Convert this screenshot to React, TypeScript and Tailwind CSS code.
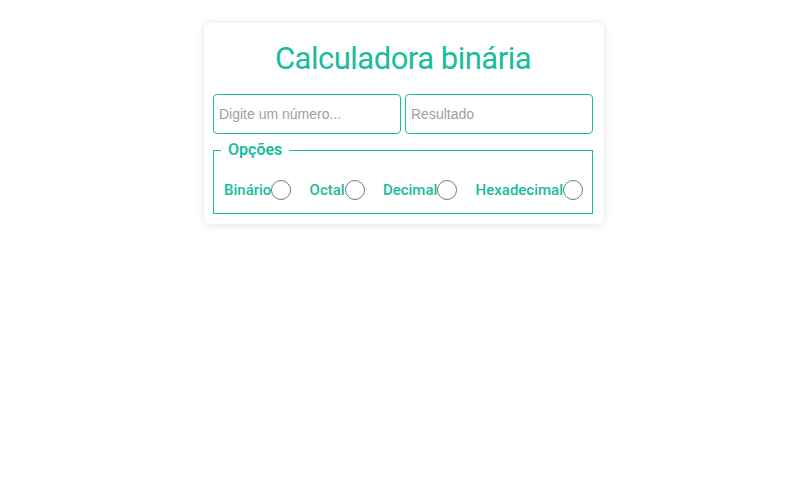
export default function App() {
  const options = ["Binário", "Octal", "Decimal", "Hexadecimal"];

  return (
    <main className="min-h-screen bg-white pr-[3px] pt-[23px] font-['Roboto','Open_Sans',sans-serif]">
      <div className="mx-auto w-[400px] rounded-md bg-white pb-[10px] pl-[9px] pr-[11px] pt-[16px] shadow-[0_1px_8px_rgba(0,0,0,0.12)]">
        <h1 className="text-center text-[31px] leading-[40px] tracking-[-0.5px] text-[#1abc9c]">
          Calculadora binária
        </h1>
        <div className="mt-[15px] flex gap-1">
          <input
            placeholder="Digite um número..."
            className="h-10 w-0 min-w-0 flex-1 rounded border border-[#1abc9c] px-[5px] font-['Liberation_Sans',Arial,sans-serif] text-sm text-gray-700 placeholder:text-[#a0a0a0] focus:outline-none"
          />
          <input
            placeholder="Resultado"
            readOnly
            className="h-10 w-0 min-w-0 flex-1 rounded border border-[#1abc9c] px-[5px] font-['Liberation_Sans',Arial,sans-serif] text-sm text-gray-700 placeholder:text-[#a0a0a0] focus:outline-none"
          />
        </div>
        <fieldset className="mt-[6px] border border-[#1abc9c] pb-[11px] pl-[10px] pr-[9px] pt-[19px]">
          <legend className="-ml-[3px] px-[7px] text-[16px] font-semibold leading-5 text-[#1abc9c]">
            Opções
          </legend>
          <div className="flex items-center justify-between">
            {options.map((o) => (
              <label key={o} className="flex items-center text-[15px] font-medium text-[#1abc9c]">
                {o}
                <input
                  type="radio"
                  name="base"
                  className="h-5 w-5 appearance-none rounded-full border border-[#777] bg-white"
                />
              </label>
            ))}
          </div>
        </fieldset>
      </div>
    </main>
  );
}
